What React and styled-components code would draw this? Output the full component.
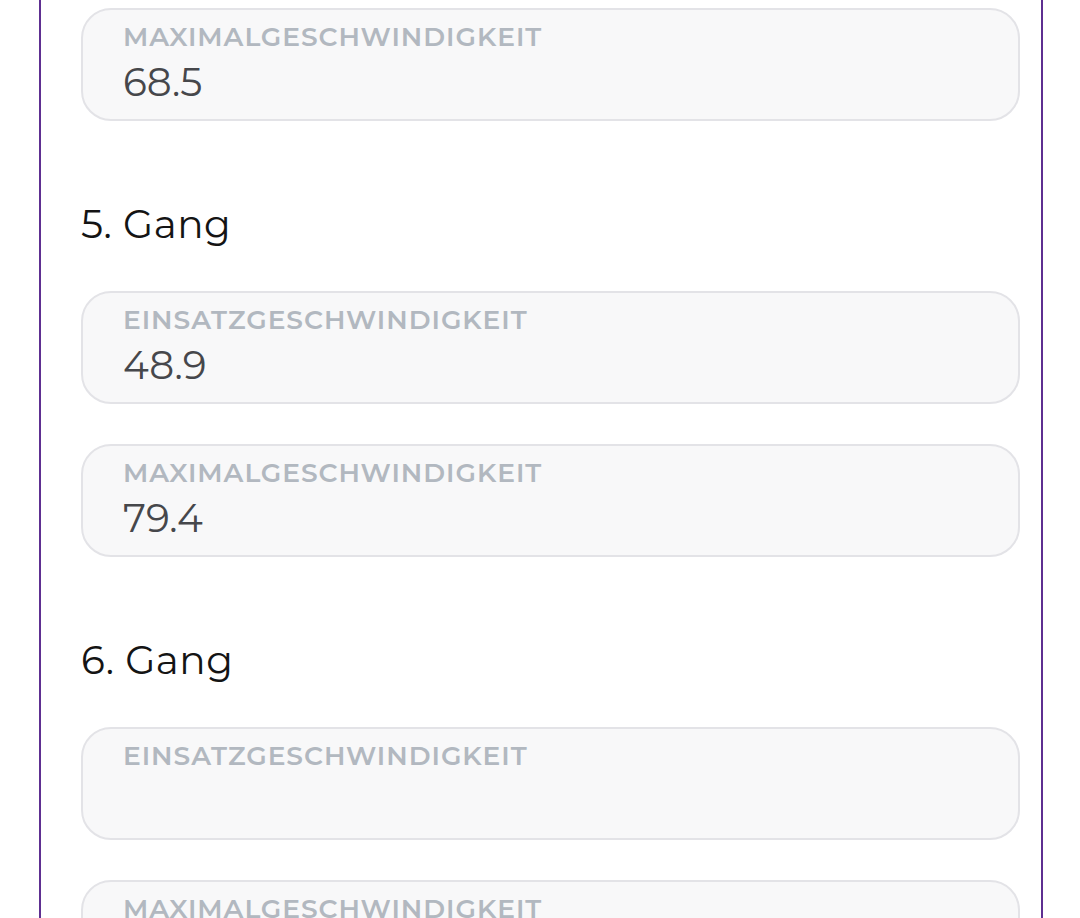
import React from 'react';
import styled, { createGlobalStyle } from 'styled-components';

const GlobalStyle = createGlobalStyle`
  body {
    margin: 0;
    background: #ffffff;
    font-family: Montserrat, "DejaVu Sans", sans-serif;
  }
`;

const gears = [
  { name: '5. Gang', start: '48.9', max: '79.4' },
  { name: '6. Gang', start: '', max: '' },
];

const App = () => {
  return (
    <>
      <GlobalStyle />
      <Card>
        <Field>
          <Label>Maximalgeschwindigkeit</Label>
          <Value>68.5</Value>
        </Field>
        {gears.map((g) => (
          <Section key={g.name}>
            <Heading>{g.name}</Heading>
            <Field>
              <Label>Einsatzgeschwindigkeit</Label>
              <Value>{g.start}</Value>
            </Field>
            <Field>
              <Label>Maximalgeschwindigkeit</Label>
              <Value>{g.max}</Value>
            </Field>
          </Section>
        ))}
      </Card>
    </>
  );
};

export default App;

// Styled Components:

const Card = styled.div`
  margin-left: 39px;
  width: 1004px;
  box-sizing: border-box;
  border-left: 2px solid #5e2f91;
  border-right: 2px solid #5e2f91;
  padding: 8px 21px 0 40px;
  height: 918px;
  overflow: hidden;
  display: flex;
  flex-direction: column;
  gap: 40px;
`;

const Section = styled.div`
  display: flex;
  flex-direction: column;
  gap: 40px;
`;

const Heading = styled.div`
  font-size: 39px;
  line-height: 46px;
  letter-spacing: 0.5px;
  color: #141414;
  font-weight: 400;
  padding-top: 40px;
  margin-bottom: 4px;
`;

const Field = styled.div`
  height: 113px;
  box-sizing: border-box;
  border: 2px solid #e3e3e7;
  border-radius: 30px;
  background: #f8f8f9;
  padding: 12px 40px 0;
  flex-shrink: 0;
`;

const Label = styled.div`
  font-size: 26.5px;
  line-height: 30px;
  font-weight: 600;
  letter-spacing: 0.95px;
  text-transform: uppercase;
  color: #b2b8c0;
`;

const Value = styled.div`
  margin-top: 4px;
  font-size: 39px;
  line-height: 52px;
  min-height: 52px;
  color: #46474b;
  font-weight: 400;
`;
